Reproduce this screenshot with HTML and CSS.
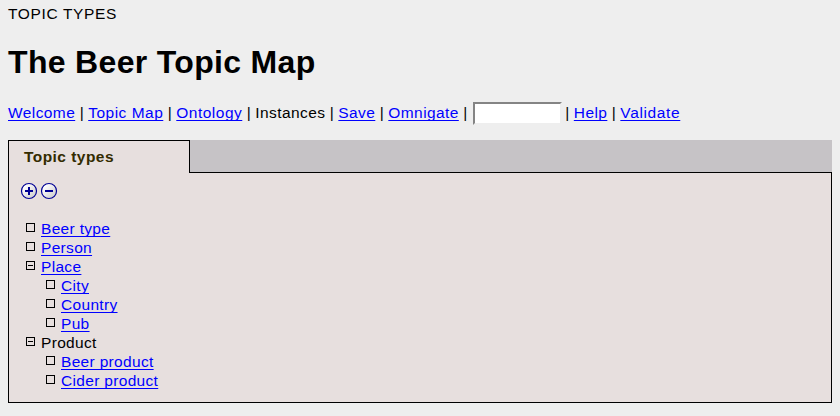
FILE: index.html
```html
<!DOCTYPE html>
<html lang="en">
<head>
<meta charset="utf-8">
<title>The Beer Topic Map</title>
<link rel="stylesheet" href="styles.css">
</head>
<body>
<div class="kicker">TOPIC TYPES</div>
<h1>The Beer Topic Map</h1>
<nav class="menu"><a href="#">Welcome</a> | <a href="#" class="wide">Topic Map</a> | <a href="#" class="wide">Ontology</a> | <span>Instances</span> | <a href="#">Save</a> | <a href="#">Omnigate</a> | <input class="search" type="text"> | <a href="#">Help</a> | <a href="#" class="wider">Validate</a></nav>
<div class="tabs"><div class="tab">Topic types</div></div>
<main class="panel">
<div class="tools">
<svg width="18" height="18" viewBox="0 0 18 18"><defs><linearGradient id="shade" x2="1" y2="1"><stop offset=".2" stop-color="#fff"/><stop offset="1" stop-color="#c6c6c6"/></linearGradient></defs><circle cx="9" cy="9" r="7.5"/><path d="M5 9h8M9 5v8"/></svg>
<svg width="18" height="18" viewBox="0 0 18 18"><circle cx="9" cy="9" r="7.5"/><path d="M5 9h8"/></svg>
</div>
<ul class="tree">
<li><i class="box"></i><a href="#">Beer type</a></li>
<li><i class="box"></i><a href="#">Person</a></li>
<li><i class="box open"></i><a href="#">Place</a></li>
<li class="sub"><i class="box"></i><a href="#">City</a></li>
<li class="sub"><i class="box"></i><a href="#">Country</a></li>
<li class="sub"><i class="box"></i><a href="#">Pub</a></li>
<li><i class="box open"></i>Product</li>
<li class="sub"><i class="box"></i><a href="#">Beer product</a></li>
<li class="sub"><i class="box"></i><a href="#">Cider product</a></li>
</ul>
</main>
</body>
</html>
```
FILE: styles.css
```css
* { box-sizing: border-box; }
body { margin: 0; padding: 4px 8px 0; height: 416px; overflow: hidden; background: #eeeeee; color: #000; font: 15.49px/19px "Liberation Sans", Arial, sans-serif; }
a { color: #0000ff; text-decoration: underline 1px; text-decoration-skip-ink: none; text-underline-offset: 2px; }
.kicker { letter-spacing: .65px; }
h1 { margin: 20px 0 0; font-size: 32px; line-height: 38px; letter-spacing: .33px; }
.menu { display: flow-root; height: 24px; margin-top: 20px; line-height: 24px; white-space: nowrap; letter-spacing: .12px; }
.menu a, .menu span { letter-spacing: .42px; }
.menu .wide { letter-spacing: .5px; }
.menu .wider { letter-spacing: .64px; }
.search { width: 89px; height: 23px; margin: 0 -1px 0 1px; padding: 1px; border: 2px solid; border-color: #848484 #eeeeee #eeeeee #848484; vertical-align: middle; background: #fff; }
.tabs { display: flex; height: 33px; margin-top: 15px; background: #c6c3c6; }
.tab { width: 182px; padding: 6px 15px; border: 1px solid #000; border-bottom: 0; background: #e7dfde; color: #332b00; font-weight: bold; letter-spacing: .46px; z-index: 1; }
.panel { height: 231px; margin-top: -1px; border: 1px solid #000; background: #e7dfde; }
.tools { display: flex; gap: 2px; padding: 9px 0 0 11px; }
.tools svg { fill: url(#shade); stroke: #000094; stroke-width: 1.2; }
.tools path { stroke-width: 2; }
.tree { list-style: none; margin: 19px 0 0; padding: 0 0 0 17px; letter-spacing: .33px; }
.tree li { display: flex; height: 19px; }
.tree .sub { padding-left: 20px; }
.box { width: 9px; height: 9px; margin: 4px 6px 0 0; border: 1px solid #000; }
.open { background: linear-gradient(#000, #000) center / 5px 1px no-repeat; }
```
